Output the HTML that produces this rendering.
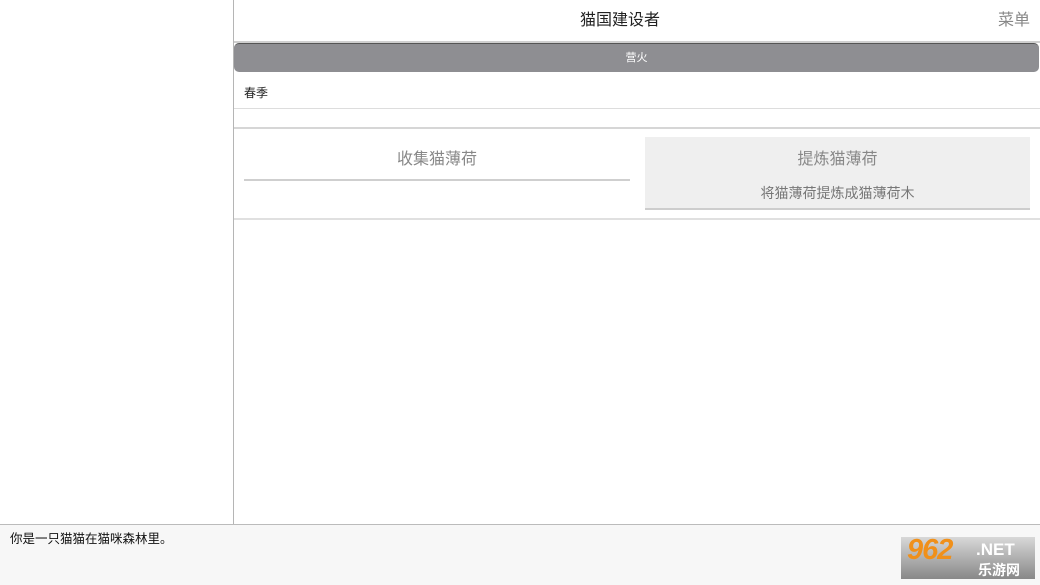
<!DOCTYPE html>
<html><head><meta charset="utf-8"><style>
*{margin:0;padding:0;box-sizing:border-box}
body{width:1040px;height:585px;background:#fff;position:relative;overflow:hidden;font-family:"Liberation Sans","Noto Sans CJK SC",sans-serif}
.a{position:absolute}
</style></head><body>
<div class="a" style="left:233px;top:0;width:1px;height:524px;background:#b5b5b5"></div>
<div class="a" style="left:234px;top:0;width:772px;height:42px;text-align:center;line-height:42px;font-size:16px;color:#222">猫国建设者</div>
<div class="a" style="left:998px;top:0;line-height:42px;font-size:16px;color:#888">菜单</div>
<div class="a" style="left:234px;top:41px;width:806px;height:2px;background:#cfcfcf"></div>
<div class="a" style="left:234px;top:43px;width:805px;height:29px;background:#8e8e92;border-radius:5px;border-top:1px solid #555;color:#fff;font-size:11px;text-align:center;line-height:28px">营火</div>
<div class="a" style="left:244px;top:84px;font-size:12px;color:#222">春季</div>
<div class="a" style="left:234px;top:108px;width:806px;height:1px;background:#ddd"></div>
<div class="a" style="left:234px;top:127px;width:806px;height:2px;background:#d6d6d6"></div>
<div class="a" style="left:244px;top:145px;width:386px;text-align:center;font-size:16px;color:#888">收集猫薄荷</div>
<div class="a" style="left:244px;top:179px;width:386px;height:2px;background:#cfcfcf"></div>
<div class="a" style="left:645px;top:137px;width:385px;height:73px;background:#efefef;border-bottom:2px solid #cdcdcd"></div>
<div class="a" style="left:645px;top:145px;width:385px;text-align:center;font-size:16px;color:#888">提炼猫薄荷</div>
<div class="a" style="left:645px;top:183px;width:385px;text-align:center;font-size:14px;color:#777">将猫薄荷提炼成猫薄荷木</div>
<div class="a" style="left:234px;top:218px;width:806px;height:2px;background:#e0e0e0"></div>
<div class="a" style="left:0;top:524px;width:1040px;height:1px;background:#bbb"></div>
<div class="a" style="left:0;top:525px;width:1040px;height:60px;background:#f7f7f7"></div>
<div class="a" style="left:10px;top:528px;font-size:12.5px;color:#111">你是一只猫猫在猫咪森林里。</div>
<div class="a" style="left:901px;top:537px;width:134px;height:42px;background:linear-gradient(#d8d8d8,#888)"></div>
<div class="a" style="left:907px;top:534px;font-size:29px;font-weight:900;font-style:italic;color:#f0901a;letter-spacing:-1px">962</div>
<div class="a" style="left:976px;top:540px;font-size:17px;font-weight:bold;color:#fff">.NET</div>
<div class="a" style="left:978px;top:560px;font-size:14px;font-weight:bold;color:#fff">乐游网</div>
</body></html>
